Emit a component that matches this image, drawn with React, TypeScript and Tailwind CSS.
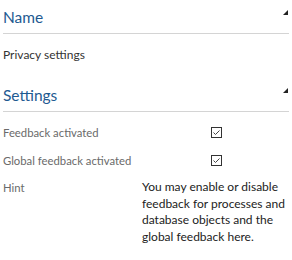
import React from "react";

function Header({ title }: { title: string }) {
  return (
    <div className="flex items-end justify-between border-b border-[#d4d4d4] h-[34px] pb-[6px]">
      <span className="text-[15.5px] leading-[20px] text-[#1e5a91]">{title}</span>
      <svg width="5" height="5" viewBox="0 0 5 5" className="mb-[12px] mr-[1px]">
        <polygon points="5,0 5,5 0,5" fill="#222" />
      </svg>
    </div>
  );
}

function Check() {
  return (
    <div className="w-[11px] h-[11px] border border-[#333] flex items-center justify-center">
      <svg width="9" height="9" viewBox="0 0 9 9">
        <polyline points="1.5,4.5 3.5,6.5 7.5,2.5" fill="none" stroke="#444" strokeWidth="1" />
      </svg>
    </div>
  );
}

export default function App() {
  return (
    <div className="w-[292px] h-[260px] bg-white pl-[3px] pr-[3px]" style={{ fontFamily: 'Lato, "Noto Sans", sans-serif' }}>
      <Header title="Name" />
      <div className="pt-[12px] h-[44px] text-[12px] leading-[17px] text-[#333]">Privacy settings</div>
      <Header title="Settings" />
      <div className="text-[11.3px] leading-[17px] text-[#6a6a6a] pt-[6px]">
        <div className="flex items-center h-[28px]">
          <div className="w-[208px]">Feedback activated</div>
          <Check />
        </div>
        <div className="flex items-center h-[28px]">
          <div className="w-[208px]">Global feedback activated</div>
          <Check />
        </div>
        <div className="flex pt-[5px]">
          <div className="w-[139px]">Hint</div>
          <div className="flex-1 text-[12px] text-[#222] leading-[16.7px]">
            You may enable or disable feedback for processes and database objects and the global feedback here.
          </div>
        </div>
      </div>
    </div>
  );
}
